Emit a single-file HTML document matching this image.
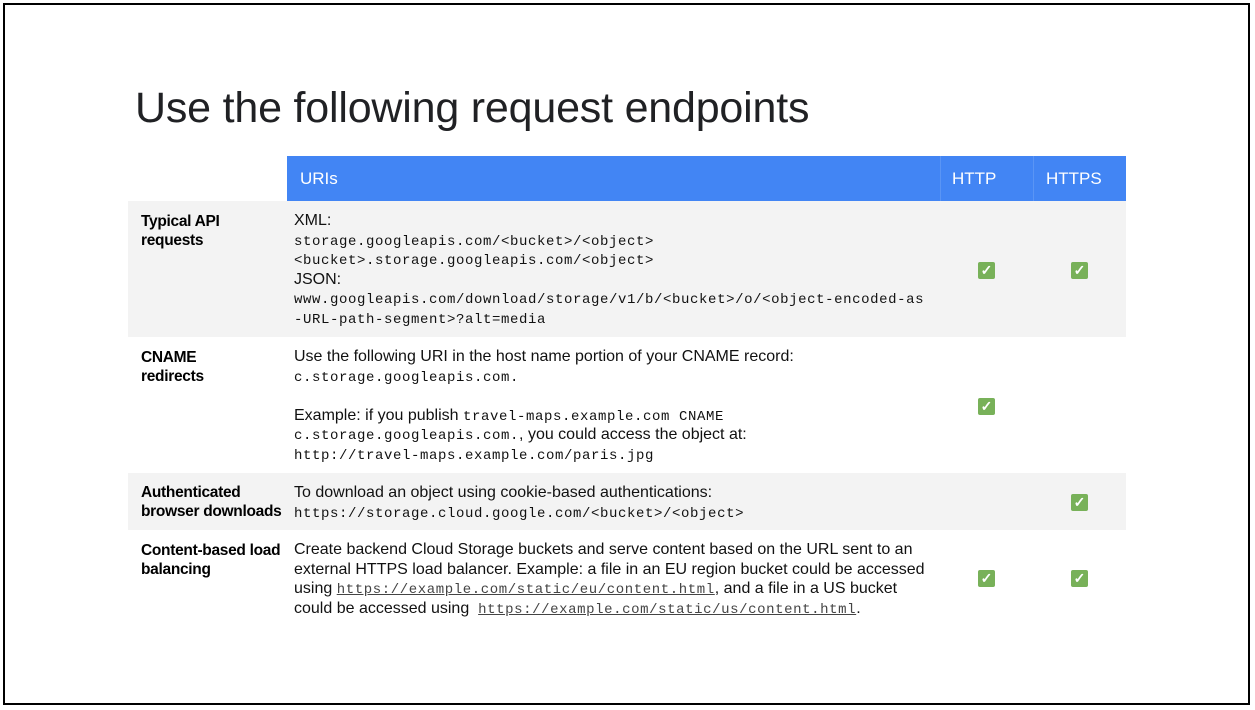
<!DOCTYPE html>
<html><head><meta charset="utf-8"><style>
body{margin:0;width:1255px;height:710px;background:#fff;position:relative;overflow:hidden;font-family:"Liberation Sans",sans-serif;}
.frame{position:absolute;left:3px;top:3px;width:1247px;height:702px;border:2px solid #000;box-sizing:border-box;}
h1{position:absolute;left:135px;top:84px;margin:0;font-weight:400;font-size:43px;color:#202124;letter-spacing:-0.2px;}
.r{position:absolute;left:128px;width:998px;}
.c{position:absolute;box-sizing:border-box;}
.hdr{top:156px;height:45px;background:#4285f4;}
.hdr .c{color:#fff;font-size:17px;top:0;height:45px;line-height:45px;}
.g{background:#f3f3f3;}
.lab{left:13px;width:150px;font-weight:700;font-size:15.5px;line-height:19px;color:#000;letter-spacing:-0.3px;}
.txt{left:166px;width:640px;font-size:16px;line-height:19.5px;color:#111;}
.m{font-family:"Liberation Mono",monospace;font-size:14px;letter-spacing:0.6px;line-height:0;}
a{color:#444;text-decoration:underline;}
.ck{position:absolute;width:17px;height:17px;background:#78b159;border-radius:2px;color:#fff;font-size:14px;line-height:17px;text-align:center;font-weight:700;}
</style></head><body>
<div class="frame"></div>
<h1>Use the following request endpoints</h1>
<div class="r hdr" style="left:287px;width:839px;">
<div class="c" style="left:13px">URIs</div>
<div class="c" style="left:653px;width:1px;height:45px;background:#5a95f5"></div>
<div class="c" style="left:665px">HTTP</div>
<div class="c" style="left:746px;width:1px;height:45px;background:#5a95f5"></div>
<div class="c" style="left:759px">HTTPS</div>
</div>
<div class="r g" style="top:201px;height:136px;">
<div class="c lab" style="top:11px">Typical API<br>requests</div>
<div class="c txt" style="top:10px;width:660px">XML:<br><span class="m">storage.googleapis.com/&lt;bucket&gt;/&lt;object&gt;</span><br><span class="m">&lt;bucket&gt;.storage.googleapis.com/&lt;object&gt;</span><br>JSON:<br><span class="m">www.googleapis.com/download/storage/v1/b/&lt;bucket&gt;/o/&lt;object-encoded-as</span><br><span class="m">-URL-path-segment&gt;?alt=media</span></div>
<div class="ck" style="left:850px;top:61px">✓</div><div class="ck" style="left:943px;top:61px">✓</div>
</div>
<div class="r" style="top:337px;height:136px;">
<div class="c lab" style="top:11px">CNAME<br>redirects</div>
<div class="c txt" style="top:10px">Use the following URI in the host name portion of your CNAME record:<br><span class="m">c.storage.googleapis.com.</span><br><br>Example: if you publish <span class="m">travel-maps.example.com CNAME</span><br><span class="m">c.storage.googleapis.com.</span>, you could access the object at:<br><span class="m">http://travel-maps.example.com/paris.jpg</span></div>
<div class="ck" style="left:850px;top:61px">✓</div>
</div>
<div class="r g" style="top:473px;height:57px;">
<div class="c lab" style="top:10px">Authenticated<br>browser downloads</div>
<div class="c txt" style="top:10px">To download an object using cookie-based authentications:<br><span class="m">https://storage.cloud.google.com/&lt;bucket&gt;/&lt;object&gt;</span></div>
<div class="ck" style="left:943px;top:21px">✓</div>
</div>
<div class="r" style="top:530px;height:96px;">
<div class="c lab" style="top:11px">Content-based load<br>balancing</div>
<div class="c txt" style="top:10px">Create backend Cloud Storage buckets and serve content based on the URL sent to an external HTTPS load balancer. Example: a file in an EU region bucket could be accessed using <a class="m">https://example.com/static/eu/content.html</a>, and a file in a US bucket could be accessed using &nbsp;<a class="m">https://example.com/static/us/content.html</a>.</div>
<div class="ck" style="left:850px;top:40px">✓</div><div class="ck" style="left:943px;top:40px">✓</div>
</div>
</body></html>
